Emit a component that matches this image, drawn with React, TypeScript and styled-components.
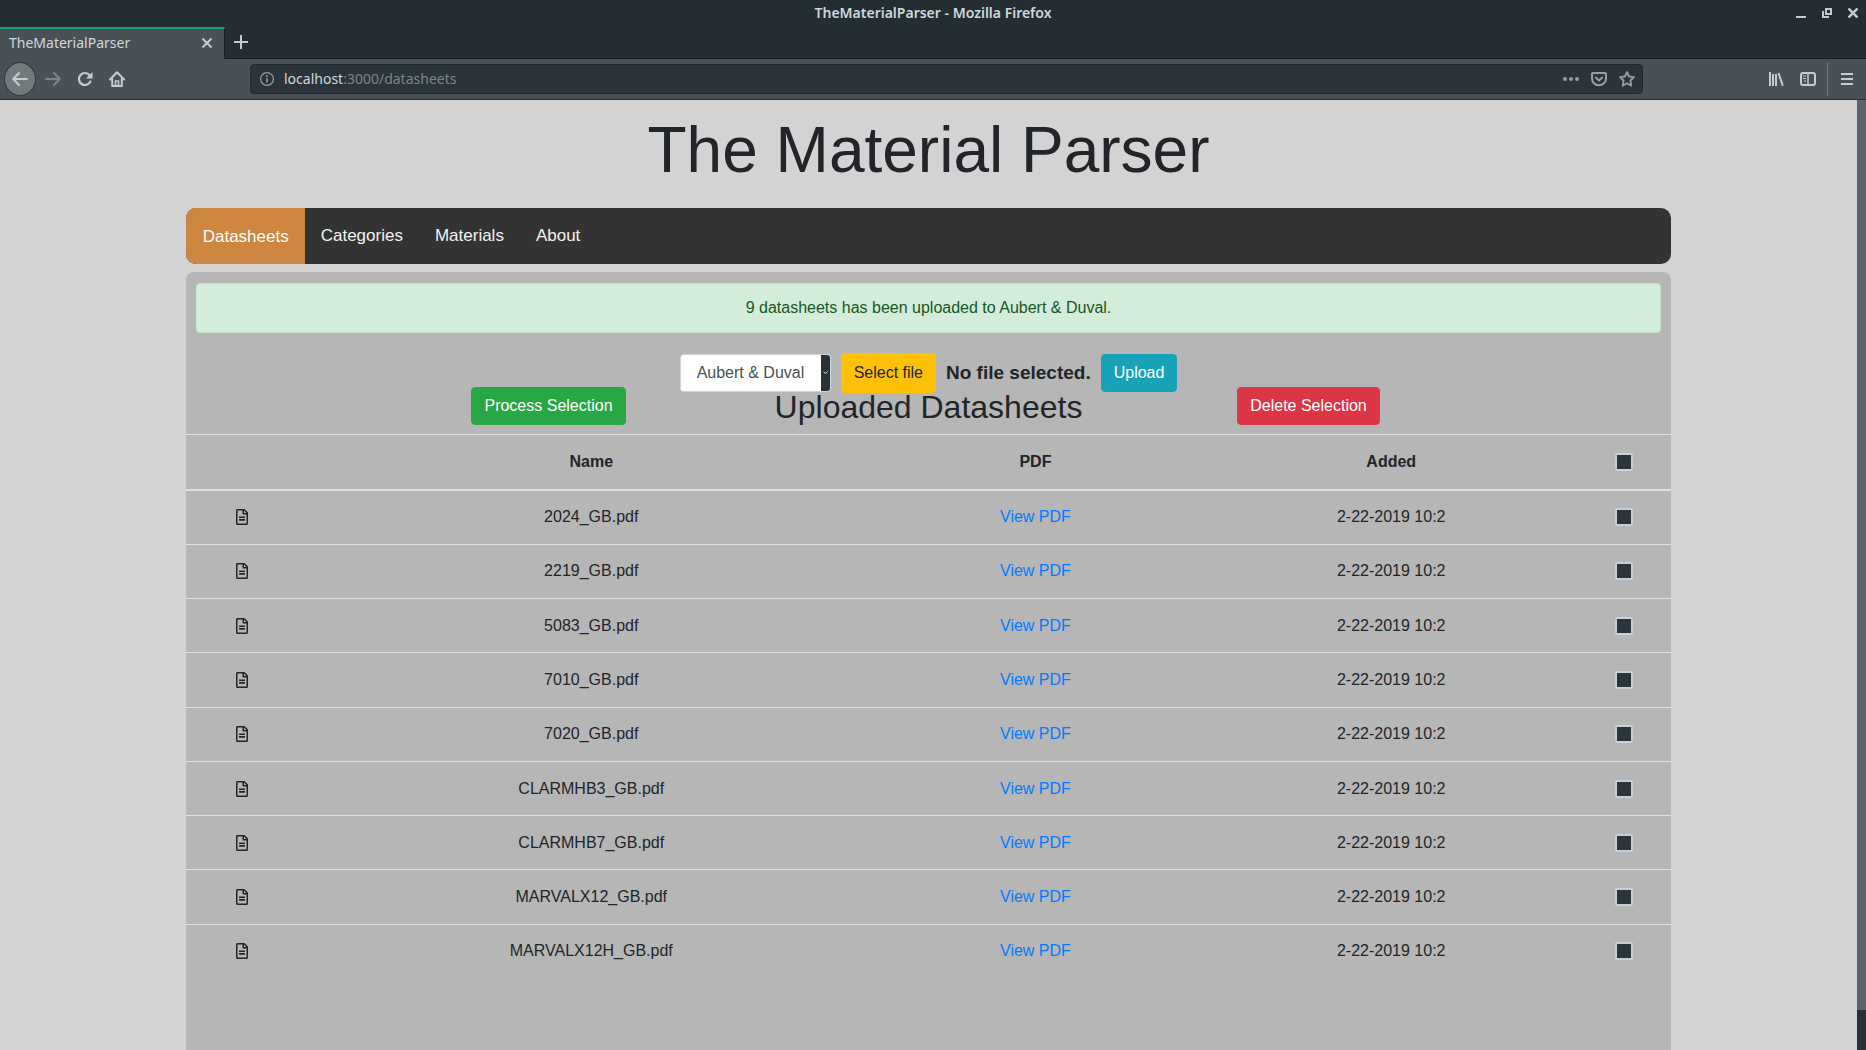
import React, { useState } from "react";
import styled, { createGlobalStyle } from "styled-components";

const GlobalStyle = createGlobalStyle`
  *, *::before, *::after { box-sizing: border-box; }
  body { margin: 0; background: #d3d3d3; }
  button, select, input { font: inherit; }
`;

const uiFont = `"Noto Sans", "Open Sans", sans-serif`;
const pageFont = `"Liberation Sans", Arial, sans-serif`;

const Window = styled.div`
  display: flex;
  flex-direction: column;
  height: 100vh;
  overflow: hidden;
`;

/* ---------- browser chrome ---------- */

const TitleBar = styled.header`
  display: grid;
  grid-template-columns: 1fr auto 1fr;
  align-items: center;
  height: 26px;
  padding: 0 8px;
  background: #232d32;
  color: #cfd8dc;
  font: 600 14px/24px ${uiFont};
`;

const WindowTitle = styled.div`
  grid-column: 2;
`;

const WindowControls = styled.div`
  display: flex;
  justify-content: flex-end;
  gap: 16px;
`;

const IconButton = styled.button<{ $width?: number; $dim?: boolean }>`
  display: flex;
  align-items: center;
  justify-content: center;
  flex: none;
  width: ${(p) => p.$width ?? 16}px;
  padding: 0;
  border: 0;
  background: none;
  color: ${(p) => (p.$dim ? "#7b858a" : "#c3cccf")};
`;

const TabStrip = styled.div`
  display: flex;
  height: 33px;
  background: #232d32;
  border-bottom: 1px solid #172024;
`;

const Tab = styled.div`
  display: flex;
  align-items: center;
  justify-content: space-between;
  width: 225px;
  height: 32px;
  margin-top: 1px;
  padding: 0 9px 2px;
  background: #4a5156;
  border-top: 2px solid #16a085;
  border-right: 1px solid #172024;
  color: #cfd8dc;
  font: 14px/20px ${uiFont};
`;

const NewTab = styled(IconButton)`
  width: 32px;
`;

const Toolbar = styled.div`
  display: flex;
  align-items: center;
  height: 41px;
  padding: 0 11px 0 4px;
  background: #4a5156;
  border-bottom: 1px solid #232d32;
`;

const BackButton = styled(IconButton)`
  width: 32px;
  height: 34px;
  border: 1px solid #2f393e;
  border-radius: 50%;
  background: #73797d;
`;

const ButtonGroup = styled.div<{ $gap: number }>`
  display: flex;
  align-items: center;
  gap: ${(p) => p.$gap}px;
`;

const Spacer = styled.div`
  flex: 1;
`;

const AddressBar = styled.div`
  display: flex;
  align-items: center;
  gap: 10px;
  flex: 11;
  height: 30px;
  padding: 0 7px 0 9px;
  background: #2a343a;
  border: 1px solid #1f292e;
  border-radius: 4px;
  color: #96a0a4;
`;

const Address = styled.div`
  flex: 1;
  color: #7b868b;
  font: 14px/20px ${uiFont};

  strong {
    color: #cfd8dc;
    font-weight: 400;
  }
`;

const Divider = styled.div`
  width: 1px;
  height: 34px;
  background: #6d777b;
`;

/* ---------- viewport ---------- */

const Viewport = styled.div`
  display: flex;
  flex: 1;
  min-height: 0;
`;

const ScrollTrack = styled.div`
  width: 9px;
  background: #263238;
`;

const ScrollThumb = styled.div`
  height: 95.8%;
  background: #5a656b;
`;

const Page = styled.main`
  display: flex;
  flex-direction: column;
  align-items: center;
  flex: 1;
  min-width: 0;
  padding-top: 12px;
  overflow: hidden;
  background: #d3d3d3;
  color: #212529;
  font: 16px/24px ${pageFont};
  text-align: center;
`;

const PageTitle = styled.h1`
  margin: 0 0 20px;
  font-size: 64px;
  font-weight: 400;
  line-height: 76px;
`;

const Nav = styled.nav`
  display: flex;
  flex: none;
  width: 80%;
  height: 56px;
  margin-bottom: 8px;
  overflow: hidden;
  border-radius: 10px;
  background: #333;
`;

const NavLink = styled.a<{ $active?: boolean }>`
  padding: ${(p) => (p.$active ? "16px 16px 14px 17px" : "15px 16px")};
  background: ${(p) => (p.$active ? "#cd853f" : "transparent")};
  color: ${(p) => (p.$active ? "#fff" : "#f2f2f2")};
  font-size: 17px;
  line-height: 26px;
  text-decoration: none;
`;

const Panel = styled.section`
  flex: 1 0 auto;
  width: 80%;
  border-radius: 8px 8px 0 0;
  background: #b6b6b6;
`;

const Alert = styled.div`
  margin: 11px 10px 20px;
  padding: 12px 20px;
  border: 1px solid #c3e6cb;
  border-radius: 4px;
  background: #d4edda;
  color: #155724;
`;

const UploadForm = styled.form`
  display: flex;
  align-items: center;
  justify-content: center;
  gap: 10px;
  margin-bottom: -6px;
`;

const SelectBox = styled.div`
  display: flex;
  height: 38px;
  overflow: hidden;
  border: 1px solid #ced4da;
  border-radius: 4px;
  background: #fff;
`;

const Select = styled.select`
  width: 140px;
  padding: 0 16px;
  border: 0;
  appearance: none;
  background: #fff;
  color: #495057;
`;

const SelectArrow = styled.div`
  display: flex;
  align-items: center;
  justify-content: center;
  width: 9px;
  background: #263238;
`;

const Button = styled.button<{ $color: string }>`
  height: 38px;
  padding: 6px 12px;
  border: 1px solid ${(p) => p.$color};
  border-radius: 4px;
  background: ${(p) => p.$color};
  color: #fff;
  line-height: 24px;
`;

const FileLabel = styled.label`
  padding: 8px 13px;
  border-radius: 4px;
  background: #ffc107;
  color: #212529;
`;

const FileInput = styled.input`
  display: none;
`;

const FileName = styled.strong`
  font-size: 19px;
`;

const Heading = styled.div`
  display: grid;
  grid-template-columns: repeat(3, 1fr);
  align-items: start;
  justify-items: center;
  width: 1140px;
  max-width: 100%;
  margin: 0 auto 7px;
`;

const SectionTitle = styled.h2`
  margin: 0;
  font-size: 32px;
  font-weight: 400;
  line-height: 40px;
`;

const Table = styled.table`
  width: 100%;
  height: 544px;
  border-collapse: collapse;
  table-layout: fixed;
`;

const Col = styled.col<{ $width: string }>`
  width: ${(p) => p.$width};
`;

const HeadCell = styled.th`
  height: 55px;
  padding: 12px;
  border-top: 1px solid #dee2e6;
  border-bottom: 2px solid #dee2e6;
`;

const Cell = styled.td`
  padding: 12px;
  border-top: 1px solid #dee2e6;

  svg { display: block; margin: 0 auto; }
`;

const CheckCell = styled(Cell)`
  padding-right: 30px;
`;

const CheckHeadCell = styled(HeadCell)`
  padding-right: 30px;
`;

const Link = styled.a`
  color: #007bff;
  text-decoration: none;
`;

const Checkbox = styled.input`
  display: block;
  width: 18px;
  height: 18px;
  margin: 0 auto;
  appearance: none;
  border: 2px solid #c5d0d5;
  border-radius: 2px;
  background: #2a353b;

  &:checked { background: #16a085; }
`;

/* ---------- icons ---------- */

const BackIcon = () => (
  <svg width="16" height="16" viewBox="0 0 16 16" fill="none" stroke="currentColor" strokeWidth="2" strokeLinecap="round" strokeLinejoin="round">
    <path d="M15 8H1.500M7 2L1.200 8L7 14" />
  </svg>
);

const ForwardIcon = () => (
  <svg width="16" height="16" viewBox="0 0 16 16" fill="none" stroke="currentColor" strokeWidth="2" strokeLinecap="round" strokeLinejoin="round">
    <path d="M1 8H14.500M9 2L14.800 8L9 14" />
  </svg>
);

const ReloadIcon = () => (
  <svg width="16" height="16" viewBox="0 0 16 16" fill="none">
    <path d="M12.600 4.200A6 6 0 1 0 13.400 10.500" stroke="currentColor" strokeWidth="2.200" strokeLinecap="round" />
    <path d="M15.500 1V7.500H9Z" fill="currentColor" />
  </svg>
);

const HomeIcon = () => (
  <svg width="16" height="16" viewBox="0 0 16 16" fill="none" stroke="currentColor" strokeWidth="2" strokeLinecap="round" strokeLinejoin="round">
    <path d="M1 8.500L8 1.200L15 8.500" />
    <path d="M3.200 8V15H12.800V8" />
    <path d="M6.500 14.500V10H9.500V14.500" strokeWidth="1.600" />
  </svg>
);

const InfoIcon = () => (
  <svg width="14" height="14" viewBox="0 0 14 14" fill="none" stroke="currentColor">
    <circle cx="7" cy="7" r="6.400" strokeWidth="1.200" />
    <path d="M7 6.200V10.500M7 3.200V4.900" strokeWidth="1.700" />
  </svg>
);

const DotsIcon = () => (
  <svg width="16" height="16" viewBox="0 0 16 16" fill="currentColor">
    <circle cx="2" cy="8" r="2" />
    <circle cx="8" cy="8" r="2" />
    <circle cx="14" cy="8" r="2" />
  </svg>
);

const PocketIcon = () => (
  <svg width="16" height="16" viewBox="0 0 16 16" fill="none" stroke="currentColor" strokeWidth="2" strokeLinejoin="round" strokeLinecap="round">
    <path d="M2 2H14C14.600 2 15 2.400 15 3V7.500A7 6.800 0 0 1 1 7.500V3C1 2.400 1.400 2 2 2Z" />
    <path d="M4.800 6.500L8 9.500L11.200 6.500" />
  </svg>
);

const StarIcon = () => (
  <svg width="16" height="16" viewBox="0 0 16 16" fill="none" stroke="currentColor" strokeWidth="1.800" strokeLinejoin="round">
    <path d="M8 1L10.100 5.500L15 6.100L11.400 9.500L12.300 14.700L8 12.200L3.700 14.700L4.600 9.500L1 6.100L5.900 5.500Z" />
  </svg>
);

const LibraryIcon = () => (
  <svg width="16" height="16" viewBox="0 0 16 16" stroke="currentColor" strokeWidth="2">
    <path d="M2 1V15M5 3V15M8 3V15" />
    <path d="M10.500 2L14.800 14.800" />
  </svg>
);

const SidebarIcon = () => (
  <svg width="16" height="16" viewBox="0 0 16 16" fill="none" stroke="currentColor">
    <rect x="1" y="2" width="14" height="12" rx="2" strokeWidth="2" />
    <path d="M8 2V14" strokeWidth="1.500" />
    <path d="M3 5H6M3 7.500H6M4 10H6" />
  </svg>
);

const MenuIcon = () => (
  <svg width="12" height="12" viewBox="0 0 12 12" fill="currentColor">
    <path d="M0 0H12V2H0ZM0 5H12V7H0ZM0 10H12V12H0Z" />
  </svg>
);

const MinimizeIcon = () => (
  <svg width="10" height="10" viewBox="0 0 10 10" fill="currentColor">
    <path d="M0 8H10V10H0Z" />
  </svg>
);

const RestoreIcon = () => (
  <svg width="10" height="10" viewBox="0 0 10 10" fill="none" stroke="currentColor" strokeWidth="2">
    <path d="M4 1H9V6H4Z" />
    <path d="M1 3V9H7" />
  </svg>
);

const CloseIcon = ({ weight = 2 }: { weight?: number }) => (
  <svg width="10" height="10" viewBox="0 0 10 10" stroke="currentColor" strokeWidth={weight}>
    <path d="M0.500 0.500L9.500 9.500M9.500 0.500L0.500 9.500" />
  </svg>
);

const PlusIcon = () => (
  <svg width="14" height="14" viewBox="0 0 14 14" fill="currentColor">
    <path d="M6 0H8V6H14V8H8V14H6V8H0V6H6Z" />
  </svg>
);

const ChevronIcon = () => (
  <svg width="5" height="4" viewBox="0 0 5 4" fill="none" stroke="#cfd8dc">
    <path d="M0.500 0.500L2.500 2.800L4.500 0.500" />
  </svg>
);

const FileIcon = () => (
  <svg width="12" height="16" viewBox="0 0 384 512" fill="currentColor">
    <path d="M288 248v28c0 6.600-5.400 12-12 12H108c-6.600 0-12-5.400-12-12v-28c0-6.600 5.400-12 12-12h168c6.600 0 12 5.400 12 12zm-12 72H108c-6.600 0-12 5.400-12 12v28c0 6.600 5.400 12 12 12h168c6.600 0 12-5.400 12-12v-28c0-6.600-5.400-12-12-12zm108-188.100V464c0 26.500-21.500 48-48 48H48c-26.500 0-48-21.500-48-48V48C0 21.500 21.500 0 48 0h204.100C264.800 0 277 5.100 286 14.100L369.900 98c9 8.900 14.100 21.200 14.100 33.900zm-128-80V128h76.100L256 51.900zM336 464V176H232c-13.300 0-24-10.700-24-24V48H48v416h288z" />
  </svg>
);

/* ---------- data ---------- */

const navItems = ["Datasheets", "Categories", "Materials", "About"];

const datasheets = [
  "2024_GB.pdf",
  "2219_GB.pdf",
  "5083_GB.pdf",
  "7010_GB.pdf",
  "7020_GB.pdf",
  "CLARMHB3_GB.pdf",
  "CLARMHB7_GB.pdf",
  "MARVALX12_GB.pdf",
  "MARVALX12H_GB.pdf",
];

const columnWidths = ["7.6%", "39.4%", "20.4%", "27.5%", "5.1%"];

export default function App() {
  const [selected, setSelected] = useState<string[]>([]);
  const allSelected = selected.length === datasheets.length;

  const toggle = (name: string) =>
    setSelected((current) =>
      current.includes(name) ? current.filter((n) => n !== name) : [...current, name]
    );

  return (
    <Window>
      <GlobalStyle />
      <TitleBar>
        <WindowTitle>TheMaterialParser - Mozilla Firefox</WindowTitle>
        <WindowControls>
          <IconButton $width={10} aria-label="Minimize"><MinimizeIcon /></IconButton>
          <IconButton $width={10} aria-label="Restore"><RestoreIcon /></IconButton>
          <IconButton $width={10} aria-label="Close window"><CloseIcon weight={2.5} /></IconButton>
        </WindowControls>
      </TitleBar>
      <TabStrip>
        <Tab>
          <span>TheMaterialParser</span>
          <IconButton aria-label="Close tab"><CloseIcon /></IconButton>
        </Tab>
        <NewTab aria-label="New tab"><PlusIcon /></NewTab>
      </TabStrip>
      <Toolbar>
        <ButtonGroup $gap={16}>
          <ButtonGroup $gap={9}>
            <BackButton aria-label="Back"><BackIcon /></BackButton>
            <IconButton $dim aria-label="Forward"><ForwardIcon /></IconButton>
          </ButtonGroup>
          <IconButton aria-label="Reload"><ReloadIcon /></IconButton>
          <IconButton aria-label="Home"><HomeIcon /></IconButton>
        </ButtonGroup>
        <Spacer />
        <AddressBar>
          <InfoIcon />
          <Address><strong>localhost</strong>:3000/datasheets</Address>
          <ButtonGroup $gap={12}>
            <DotsIcon />
            <PocketIcon />
            <StarIcon />
          </ButtonGroup>
        </AddressBar>
        <Spacer />
        <ButtonGroup $gap={16}>
          <IconButton aria-label="Library"><LibraryIcon /></IconButton>
          <ButtonGroup $gap={11}>
            <IconButton aria-label="Sidebars"><SidebarIcon /></IconButton>
            <Divider />
            <IconButton aria-label="Menu"><MenuIcon /></IconButton>
          </ButtonGroup>
        </ButtonGroup>
      </Toolbar>
      <Viewport>
        <Page>
          <PageTitle>The Material Parser</PageTitle>
          <Nav>
            {navItems.map((item, i) => (
              <NavLink key={item} href="#" $active={i === 0}>{item}</NavLink>
            ))}
          </Nav>
          <Panel>
            <Alert role="alert">9 datasheets has been uploaded to Aubert &amp; Duval.</Alert>
            <UploadForm onSubmit={(e) => e.preventDefault()}>
              <SelectBox>
                <Select aria-label="Supplier">
                  <option>Aubert &amp; Duval</option>
                </Select>
                <SelectArrow><ChevronIcon /></SelectArrow>
              </SelectBox>
              <FileLabel htmlFor="datasheet-file">Select file</FileLabel>
              <FileInput id="datasheet-file" type="file" />
              <FileName>No file selected.</FileName>
              <Button $color="#17a2b8" type="submit">Upload</Button>
            </UploadForm>
            <Heading>
              <Button $color="#28a745" type="button">Process Selection</Button>
              <SectionTitle>Uploaded Datasheets</SectionTitle>
              <Button $color="#dc3545" type="button">Delete Selection</Button>
            </Heading>
            <Table>
              <colgroup>
                {columnWidths.map((w, i) => <Col key={i} $width={w} />)}
              </colgroup>
              <thead>
                <tr>
                  <HeadCell />
                  <HeadCell>Name</HeadCell>
                  <HeadCell>PDF</HeadCell>
                  <HeadCell>Added</HeadCell>
                  <CheckHeadCell>
                    <Checkbox
                      type="checkbox"
                      aria-label="Select all"
                      checked={allSelected}
                      onChange={() => setSelected(allSelected ? [] : datasheets)}
                    />
                  </CheckHeadCell>
                </tr>
              </thead>
              <tbody>
                {datasheets.map((name) => (
                  <tr key={name}>
                    <Cell><FileIcon /></Cell>
                    <Cell>{name}</Cell>
                    <Cell><Link href="#">View PDF</Link></Cell>
                    <Cell>2-22-2019 10:2</Cell>
                    <CheckCell>
                      <Checkbox
                        type="checkbox"
                        aria-label={`Select ${name}`}
                        checked={selected.includes(name)}
                        onChange={() => toggle(name)}
                      />
                    </CheckCell>
                  </tr>
                ))}
              </tbody>
            </Table>
          </Panel>
        </Page>
        <ScrollTrack><ScrollThumb /></ScrollTrack>
      </Viewport>
    </Window>
  );
}
